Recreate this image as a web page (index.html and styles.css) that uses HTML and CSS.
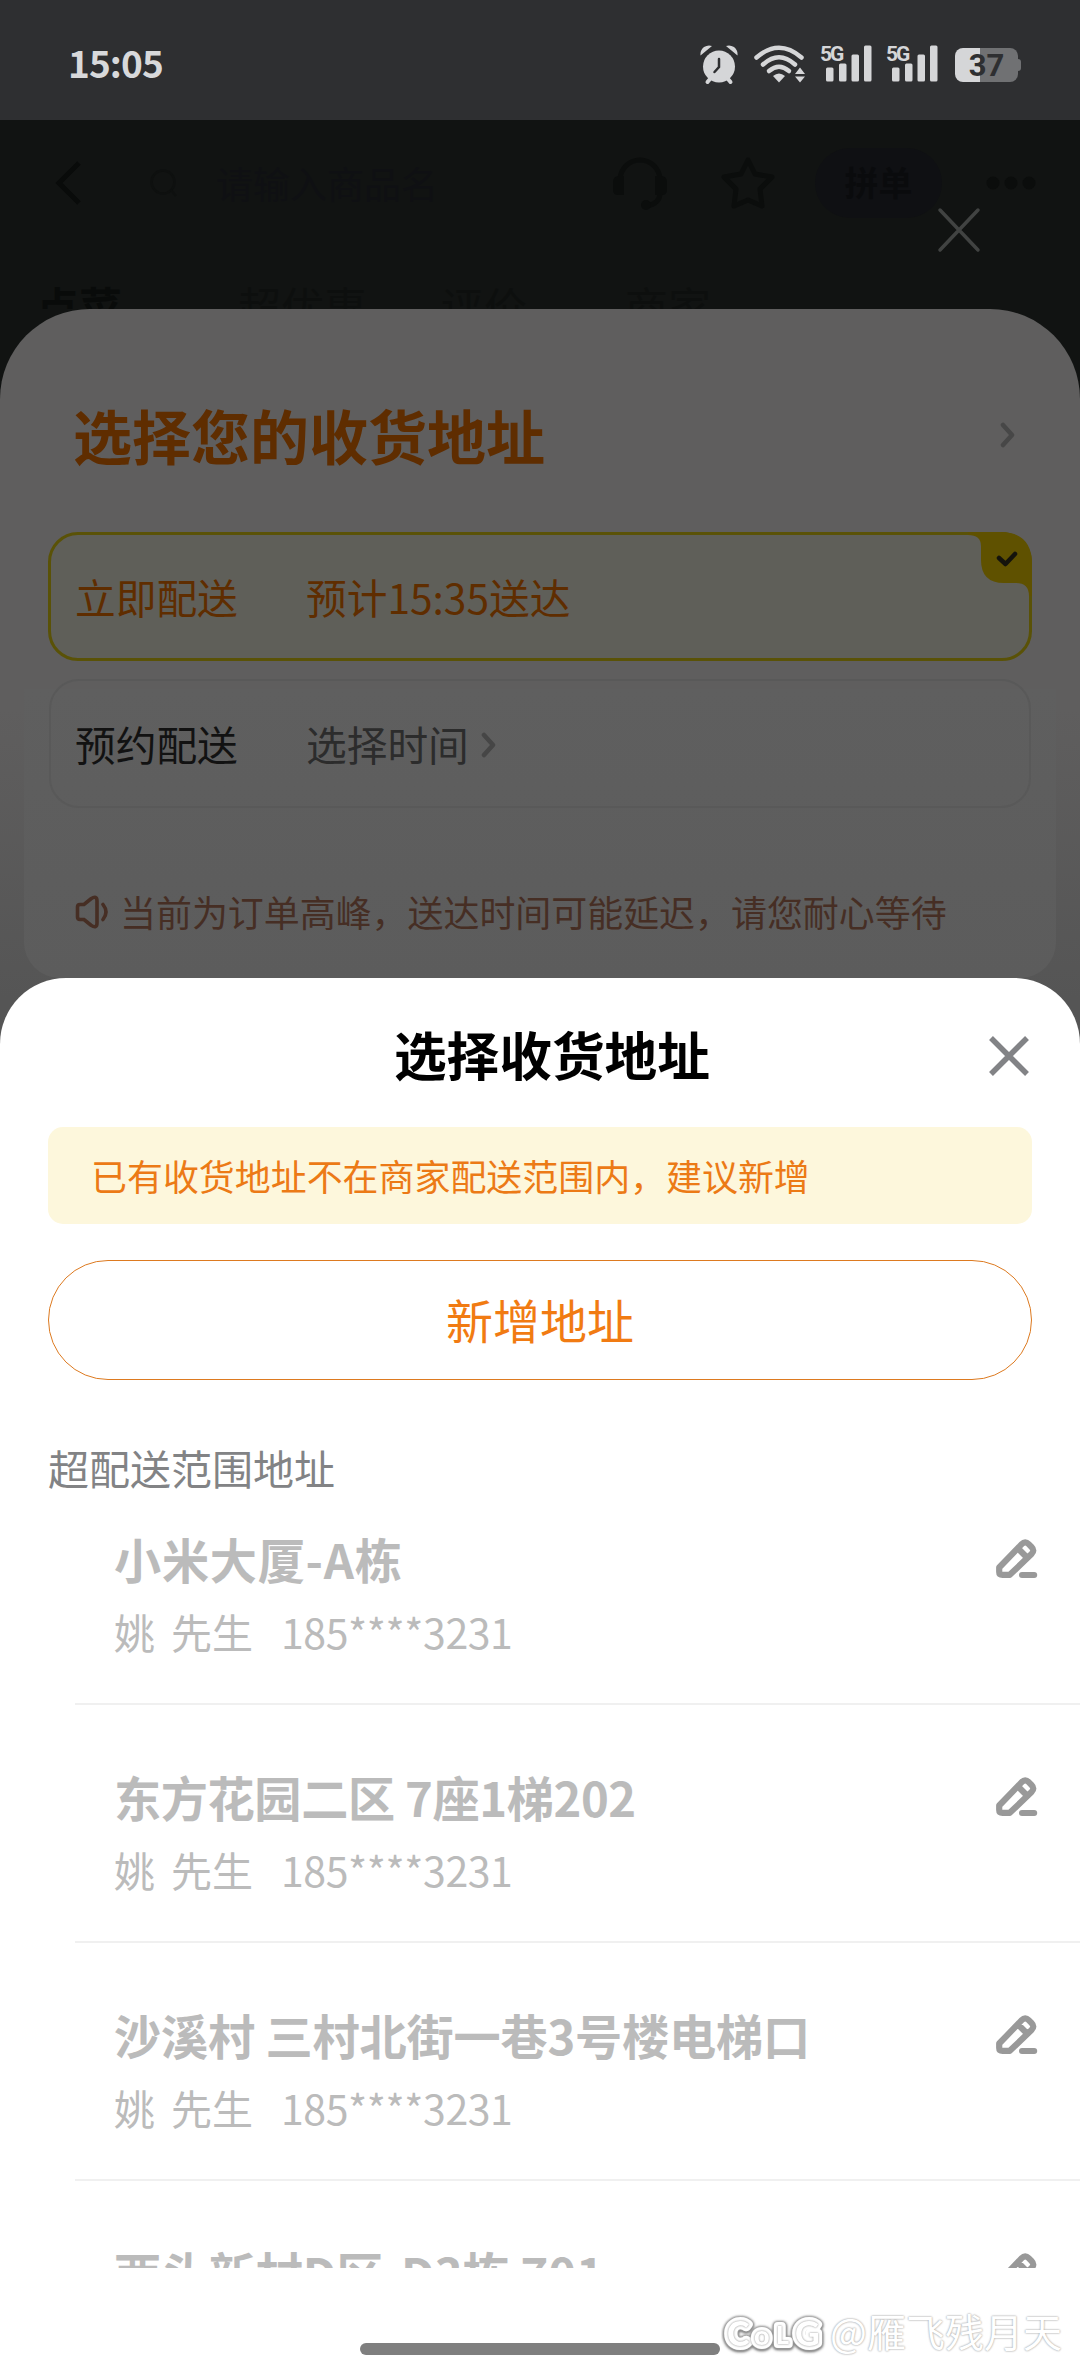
FILE: index.html
```html
<!DOCTYPE html>
<html lang="zh-CN">
<head>
<meta charset="utf-8">
<title>选择收货地址</title>
<link rel="stylesheet" href="styles.css">
</head>
<body>
<svg class="defs" width="0" height="0">
  <symbol id="pencil" viewBox="0 0 42 40">
    <path d="M3.200 28.500 25.700 5.200q3.500-3.600 7 0l2.800 2.800q3.600 3.500 0 7L13.800 35.800H6.500Q3.200 35.800 3.200 33Z M23 10.500l8 8" fill="none" stroke="#999" stroke-width="6.200" stroke-linejoin="round"/>
    <path d="M26 35.900h12.200" stroke="#999" stroke-width="6" stroke-linecap="round"/>
  </symbol>
  <symbol id="chevron" viewBox="0 0 16 26">
    <path d="M3 3l9 10-9 10" fill="none" stroke="currentColor" stroke-width="4.500" stroke-linecap="round" stroke-linejoin="round"/>
  </symbol>
  <symbol id="signal" viewBox="0 0 46 38">
    <g fill="#d5d6d8"><rect x="0" y="22.500" width="7.500" height="14" rx="1.500"/><rect x="13" y="18.500" width="7.500" height="18" rx="1.500"/><rect x="25.500" y="9.500" width="7.500" height="27" rx="1.500"/><rect x="38" y="0.500" width="7.500" height="36" rx="1.500"/></g>
  </symbol>
</svg>
<div class="phone">
  <header class="status">
    <span class="time">15:05</span>
    <div class="status-icons">
      <svg class="alarm" width="38" height="40" viewBox="0 0 38 40">
        <circle cx="19" cy="21.500" r="16" fill="#d5d6d8"/>
        <path d="M0.500 10.500Q0 5 4 2Q8-0.500 12 1ZM37.500 10.500Q38 5 34 2Q30-0.500 26 1Z" fill="#d5d6d8"/>
        <path d="M10 34l-2.500 3M28 34l2.500 3" stroke="#d5d6d8" stroke-width="4" stroke-linecap="round"/>
        <path d="M19 14v8l-4.500 5" stroke="#2e2f31" stroke-width="2.500" stroke-linecap="round" fill="none"/>
      </svg>
      <svg class="wifi" width="52" height="38" viewBox="0 0 52 38">
        <g fill="none" stroke="#d5d6d8" stroke-width="4.500" stroke-linecap="round"><path d="M2.500 12.500Q25 -7 47.500 12.500"/><path d="M9 19.500Q25 5 41 19.500"/><path d="M15 26Q25 17.500 35 26"/></g>
        <path d="M19 31q6-5 12 0l-6 6.500z" fill="#d5d6d8"/>
        <path d="M41 29h10l-5-6.500zM41 31.500h10l-5 6z" fill="#d5d6d8"/>
      </svg>
      <div class="cell"><span>5G</span><svg width="46" height="38"><use href="#signal"/></svg></div>
      <div class="cell"><span>5G</span><svg width="46" height="38"><use href="#signal"/></svg></div>
      <div class="battery"><span>37</span></div>
    </div>
  </header>

  <section class="shop">
    <div class="shop-bar">
      <svg class="back" width="28" height="46" viewBox="0 0 28 46"><path d="M25 3L5 23l20 20" fill="none" stroke="#090b0a" stroke-width="5"/></svg>
      <svg class="search" width="28" height="30" viewBox="0 0 28 30"><circle cx="13" cy="14" r="11.500" fill="none" stroke="#0e100f" stroke-width="2.500"/><path d="M21 22l5 6" stroke="#0e100f" stroke-width="2.500"/></svg>
      <span class="query">请输入商品名</span>
      <svg class="headset" width="56" height="56" viewBox="0 0 56 56"><path d="M8 28V25a20 20 0 0 1 40 0v13q0 11-14 13" fill="none" stroke="#0b0d0c" stroke-width="5"/><path d="M12 21v19H6q-5 0-5-5v-8q0-6 6-6zM43 21v19h7q5 0 5-5v-8q0-6-6-6z" fill="#0b0d0c"/><circle cx="34" cy="50" r="5" fill="#0b0d0c"/></svg>
      <svg class="star" width="58" height="56" viewBox="0 0 58 56"><path d="M29 5l7 14 17 3-12 12 2 17-14-6-14 6 2-17L5 22l17-3z" fill="none" stroke="#0b0d0c" stroke-width="5" stroke-linejoin="round"/></svg>
      <span class="group">拼单</span>
      <svg class="more" width="50" height="14" viewBox="0 0 50 14"><g fill="#0b0d0c"><circle cx="7" cy="7" r="6.500"/><circle cx="25" cy="7" r="6.500"/><circle cx="43" cy="7" r="6.500"/></g></svg>
    </div>
    <nav class="tabs"><b>点菜</b><span>超优惠</span><span>评价</span><span>商家</span></nav>
    <svg class="dismiss" width="44" height="46" viewBox="0 0 44 46"><path d="M3 3l38 40M41 3L3 43" stroke="#414342" stroke-width="3.500" stroke-linecap="round"/></svg>
  </section>

  <section class="delivery">
    <div class="panel">
      <div class="panel-title"><h2>选择您的收货地址</h2><svg width="16" height="26"><use href="#chevron"/></svg></div>
      <div class="option chosen">
        <span class="mode">立即配送</span><span class="when">预计15:35送达</span>
        <svg class="tick" width="64" height="64" viewBox="0 0 64 64"><path d="M0 0H32Q64 0 64 32V64H61Q61 51 48 51H36Q13 51 13 28V14Q13 3 0 3Z" fill="#5f5100"/><path d="M31 26l6.500 6L47 22" fill="none" stroke="#14130c" stroke-width="4.500" stroke-linecap="round" stroke-linejoin="round"/></svg>
      </div>
      <div class="option">
        <span class="mode">预约配送</span><span class="when">选择时间</span><svg class="next" width="16" height="26"><use href="#chevron"/></svg>
      </div>
      <div class="rush">
        <svg width="34" height="34" viewBox="0 0 34 34"><path d="M2.500 12Q2.500 9.500 5 9.500H9L16 3.800Q22 0 22 6V28Q22 34 16 30.200L9 24.500H5Q2.500 24.500 2.500 22Z" fill="none" stroke="#462e24" stroke-width="3.600"/><path d="M28 9.500q6 7.500 0 15" fill="none" stroke="#462e24" stroke-width="3.600" stroke-linecap="round"/></svg>
        <span>当前为订单高峰，送达时间可能延迟，请您耐心等待</span>
      </div>
    </div>
  </section>

  <main class="sheet">
    <div class="sheet-head">
      <h1>选择收货地址</h1>
      <svg class="close" width="40" height="40" viewBox="0 0 40 40"><path d="M2 2l36 36M38 2L2 38" stroke="#828386" stroke-width="5.500"/></svg>
    </div>
    <p class="notice">已有收货地址不在商家配送范围内，建议新增</p>
    <div class="add">新增地址</div>
    <h3 class="group-title">超配送范围地址</h3>
    <div class="list">
      <article class="item"><div class="info"><h4 class="a1">小米大厦-A栋</h4><p><span class="name">姚</span><span class="sir">先生</span><span class="tel">185****3231</span></p></div><svg width="42" height="40"><use href="#pencil"/></svg></article>
      <article class="item"><div class="info"><h4 class="a2">东方花园二区 7座1梯202</h4><p><span class="name">姚</span><span class="sir">先生</span><span class="tel">185****3231</span></p></div><svg width="42" height="40"><use href="#pencil"/></svg></article>
      <article class="item"><div class="info"><h4 class="a3">沙溪村 三村北街一巷3号楼电梯口</h4><p><span class="name">姚</span><span class="sir">先生</span><span class="tel">185****3231</span></p></div><svg width="42" height="40"><use href="#pencil"/></svg></article>
      <article class="item"><div class="info"><h4 class="a4">西头新村D区-D3栋 701</h4></div><svg width="42" height="40"><use href="#pencil"/></svg></article>
    </div>
    <footer class="foot"><div class="home"></div></footer>
    <div class="mark">
      <svg width="108" height="48" viewBox="0 0 108 48">
        <g class="logo"><text x="6" y="36" font-size="34">C</text><text x="33" y="35" font-size="27">o</text><text x="55" y="34" font-size="25">L</text><text x="74" y="36" font-size="34">G</text></g>
      </svg>
      <span>@雁飞残月天</span>
    </div>
  </main>
</div>
</body>
</html>
```
FILE: styles.css
```css
* { box-sizing: border-box; margin: 0; padding: 0; }
body { background: #fff; font-family: "Noto Sans CJK SC", sans-serif; }
svg { display: block; flex: none; }
.defs { position: absolute; }
.phone { position: relative; width: 1080px; height: 2376px; overflow: hidden; white-space: nowrap; }

.status { display: flex; justify-content: space-between; height: 120px; padding: 0 59px 0 68px; background: #2e2f31; }
.time { margin-top: 35px; font: bold 37px/54px "Noto Sans CJK SC", sans-serif; letter-spacing: -0.9px; color: #d8d9db; }
.status-icons { display: flex; align-items: flex-start; padding-top: 45px; }
.wifi { margin-left: 16px; }
.cell { position: relative; margin-left: 20px; }
.cell span { position: absolute; left: -6px; top: -1px; font: bold 21px/20px Roboto, sans-serif; letter-spacing: -2px; color: #d5d6d8; }
.battery { position: relative; width: 63px; height: 34px; margin: 3px 3px 0 17px; border-radius: 8px; background: linear-gradient(90deg, #d5d6d8 25px, #707173 25px); font: bold 31px/36px Roboto, sans-serif; text-align: center; color: #2e2f31; }
.battery::after { content: ""; position: absolute; right: -3px; top: 11px; width: 3px; height: 12px; border-radius: 0 3px 3px 0; background: #707173; }

.shop { position: relative; height: 189px; overflow: hidden; background: #111312; }
.shop-bar { display: flex; align-items: center; height: 126px; padding-left: 54px; }
.search { margin-left: 68px; }
.query { width: 226px; margin-left: 66px; font-size: 37px; color: #0f1013; }
.search + .query { margin-left: 38px; }
.headset { margin-left: 170px; }
.star { margin-left: 51px; }
.group { width: 127px; height: 70px; margin-left: 38px; border-radius: 35px; background: #0f1013; font-size: 34px; font-weight: bold; line-height: 68px; text-align: center; color: #0a0b0d; }
.more { margin-left: 44px; }
.tabs { display: flex; padding: 29px 0 0 36px; font-size: 43px; line-height: 60px; color: #0d0f0e; }
.tabs b { width: 202px; color: #090b0a; }
.tabs span { width: 203px; }
.tabs span:nth-child(3) { width: 184px; }
.dismiss { position: absolute; left: 937px; top: 87px; }

.delivery { height: 751px; background: linear-gradient(#111312 200px, #555 201px); }
.panel { position: relative; z-index: 0; height: 751px; padding: 0 48px; border-radius: 90px 90px 0 0; background: linear-gradient(#5f5e5e 400px, #555 690px); }
.panel::before { content: ""; position: absolute; z-index: -1; left: 24px; right: 24px; top: 380px; height: 289px; border-radius: 0 0 36px 36px; background: linear-gradient(#5f5f5f, #5c5c5c); }
.panel-title { display: flex; align-items: center; justify-content: space-between; height: 223px; padding: 30px 16px 0 25px; color: #474747; }
.panel-title h2 { margin-top: -2px; font-size: 59px; line-height: 80px; color: #5f2d00; }
.panel-title svg { margin-top: -1px; }
.option { position: relative; display: flex; align-items: center; height: 129px; margin: 0 1px; padding: 0 0 1px 24px; border: 2px solid #595959; border-radius: 30px; font-size: 40.7px; color: #121212; }
.option .mode { width: 231px; }
.option .when { color: #2c2c2c; }
.option.chosen { margin: 0 0 18px; padding-left: 24px; border: 3px solid #5a5207; background: #5f5f59; color: #5f2d00; }
.option.chosen .when { color: #5f2d00; }
.next { margin: 3px 0 0 12px; color: #464646; }
.tick { position: absolute; right: -3px; top: -3px; }
.rush { display: flex; align-items: center; gap: 11px; margin: 74px 0 0 27px; height: 60px; font-size: 35.95px; color: #462e24; }
.rush span { margin-top: -3px; }

.sheet { position: relative; height: 1398px; margin-top: -82px; border-radius: 66px 66px 0 0; background: #fff; z-index: 1; }
.sheet-head { display: flex; align-items: center; justify-content: flex-end; height: 149px; padding: 7px 51px 0 0; }
.sheet-head h1 { margin: -6px 279px 0 0; font-size: 52.7px; line-height: 70px; color: #000; }
.notice { height: 97px; margin: 0 48px; padding-left: 43px; border-radius: 15px; background: #fdf7dc; font-size: 35.95px; line-height: 97px; color: #ec7a16; }
.add { height: 120px; margin: 36px 48px 0; border: 1.500px solid #dd7a20; border-radius: 60px; font-size: 47px; line-height: 115px; text-align: center; color: #f17b12; }
.group-title { height: 60px; margin: 58px 0 0 48px; font-size: 41px; font-weight: 400; line-height: 59px; color: #828385; }
.list { height: 770px; overflow: hidden; }
.item { display: flex; align-items: flex-start; justify-content: space-between; height: 238px; margin-left: 75px; padding: 72px 42px 0 39px; border-bottom: 2px solid #f0f0f0; }
.item:first-child { height: 207px; padding-top: 41px; }
.info { margin-top: -15px; color: #bbb; }
.info h4 { height: 70px; font-size: 47.2px; line-height: 70px; }
.info .a1 { letter-spacing: 0.7px; }
.info .a2 { letter-spacing: -0.4px; }
.info .a3 { letter-spacing: -0.2px; }
.info p { display: flex; height: 60px; margin-top: 7px; font-size: 41px; line-height: 60px; }
.tel { letter-spacing: -0.4px; }
.name { width: 57px; }
.sir { width: 110px; }
.foot { height: 108px; padding-top: 75px; }
.home { width: 360px; height: 12px; margin: 0 auto; border-radius: 6px; background: #7f7f7f; }
.mark { position: absolute; left: 721px; top: 1332px; display: flex; align-items: center; gap: 1px; font-size: 39px; line-height: 48px; color: #fff; text-shadow: 0 0 2px #aaa, 0 0 2px #bbb; }
.mark span { margin-top: -8px; }
.logo { font-family: Lato, sans-serif; font-weight: 900; fill: #fff; stroke: #fff; stroke-width: 8px; stroke-linejoin: round; paint-order: stroke; filter: drop-shadow(0 1px 1px #777) drop-shadow(0 0 1px #888); }
```
